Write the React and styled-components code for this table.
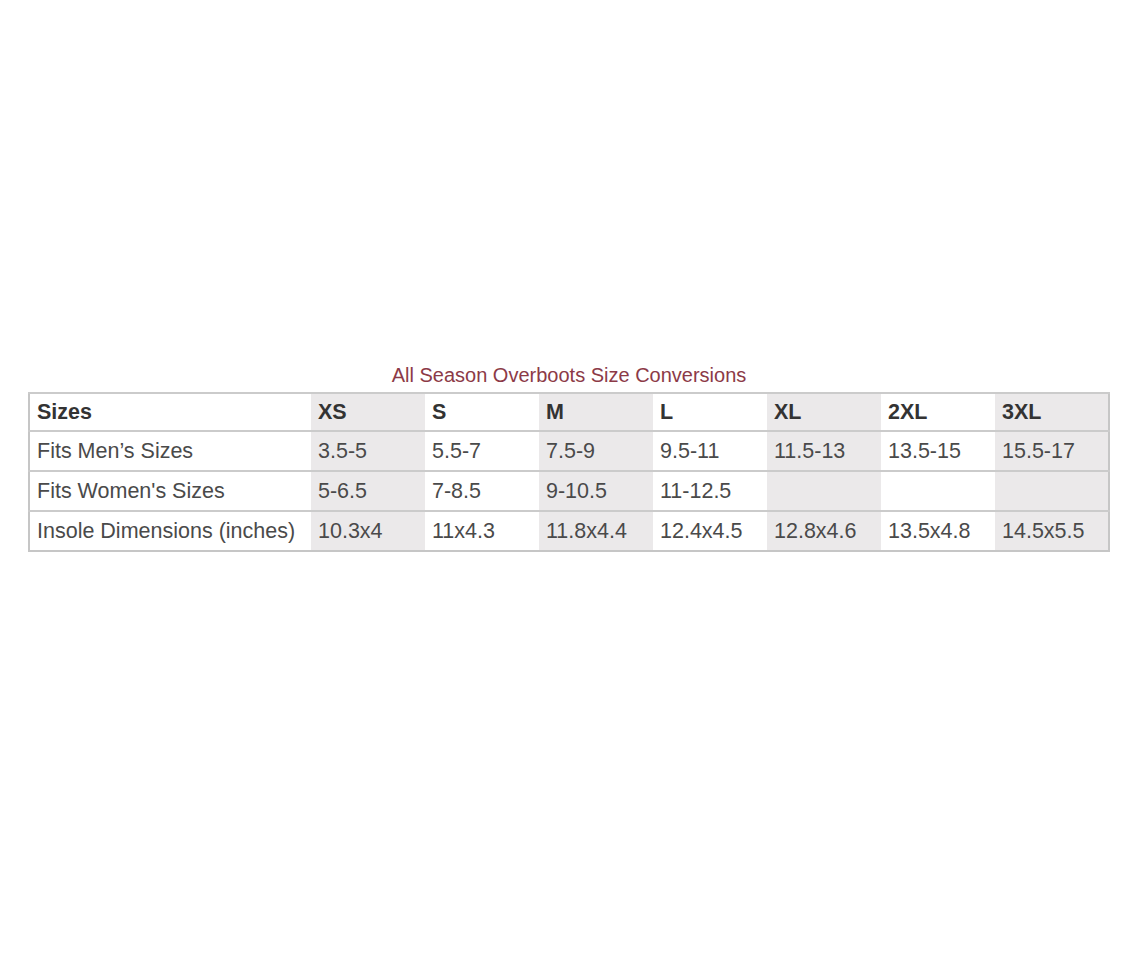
import React from "react";
import styled, { createGlobalStyle } from "styled-components";

const Global = createGlobalStyle`
  html, body { margin: 0; padding: 0; background: #fff; }
  body { font-family: "Liberation Sans", Arial, sans-serif; }
`;

const Page = styled.div`
  width: 1140px;
  height: 960px;
  padding: 363px 0 0 28px;
  box-sizing: border-box;
`;

const Title = styled.div`
  width: 1082px;
  text-align: center;
  color: #8c3a47;
  font-size: 20px;
  line-height: 24px;
  margin-bottom: 5px;
`;

const Table = styled.table`
  width: 1082px;
  border-collapse: collapse;
  table-layout: fixed;
  border: 2px solid #c6c6c6;
`;

const Cell = styled.td`
  height: ${(p) => (p.$head ? 36 : 38)}px;
  padding: 0 0 0 7px;
  border-top: 2px solid #cbcbcb;
  font-size: 21.5px;
  color: ${(p) => (p.$head ? "#333" : "#4a4a4a")};
  font-weight: ${(p) => (p.$head ? 700 : 400)};
  background: ${(p) => (p.$shade ? "#ebe9ea" : "#fff")};
  white-space: nowrap;
  vertical-align: middle;
`;

const cols = ["XS", "S", "M", "L", "XL", "2XL", "3XL"];
const rows = [
  ["Fits Men\u2019s Sizes", "3.5-5", "5.5-7", "7.5-9", "9.5-11", "11.5-13", "13.5-15", "15.5-17"],
  ["Fits Women's Sizes", "5-6.5", "7-8.5", "9-10.5", "11-12.5", "", "", ""],
  ["Insole Dimensions (inches)", "10.3x4", "11x4.3", "11.8x4.4", "12.4x4.5", "12.8x4.6", "13.5x4.8", "14.5x5.5"],
];

export default function App() {
  return (
    <Page>
      <Global />
      <Title>All Season Overboots Size Conversions</Title>
      <Table>
        <colgroup>
          <col style={{ width: 282 }} />
          {cols.map((c) => (
            <col key={c} />
          ))}
        </colgroup>
        <tbody>
          <tr>
            <Cell $head>Sizes</Cell>
            {cols.map((c, i) => (
              <Cell key={c} $head $shade={i % 2 === 0}>
                {c}
              </Cell>
            ))}
          </tr>
          {rows.map((r) => (
            <tr key={r[0]}>
              {r.map((v, i) => (
                <Cell key={i} $shade={i > 0 && (i - 1) % 2 === 0}>
                  {v}
                </Cell>
              ))}
            </tr>
          ))}
        </tbody>
      </Table>
    </Page>
  );
}
